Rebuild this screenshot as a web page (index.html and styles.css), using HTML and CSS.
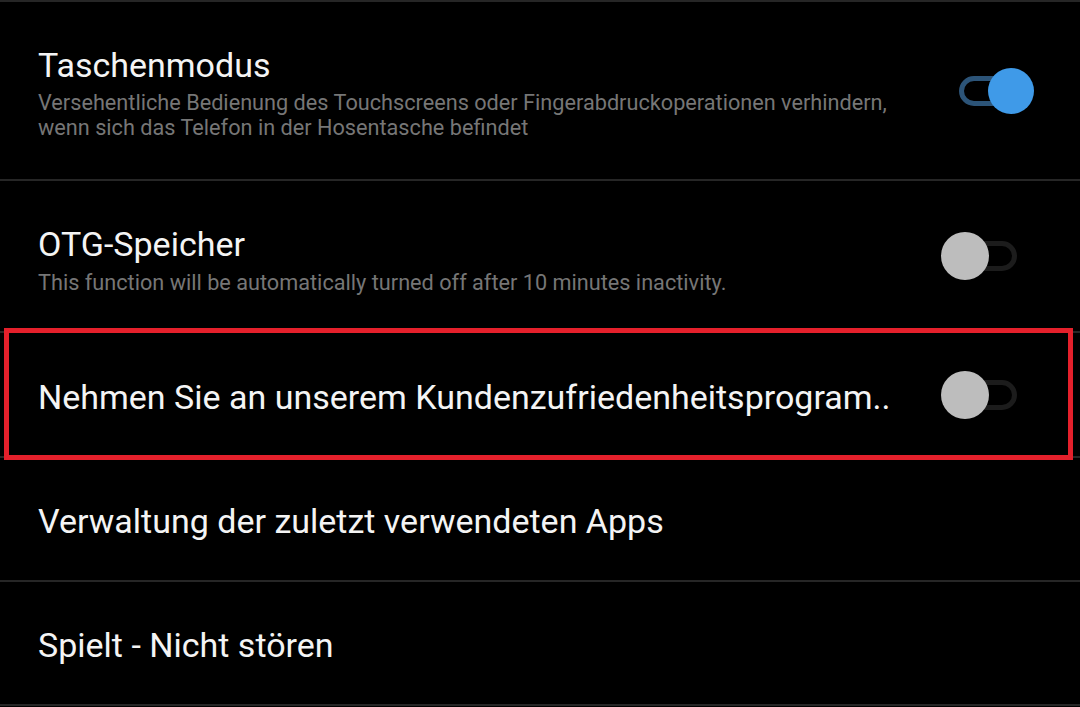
FILE: index.html
```html
<!DOCTYPE html>
<html lang="de">
<head>
<meta charset="utf-8">
<title>Einstellungen</title>
<link rel="stylesheet" href="styles.css">
</head>
<body>
<div class="list">
  <div class="row row-1">
    <div class="text">
      <div class="title">Taschenmodus</div>
      <div class="sub">Versehentliche Bedienung des Touchscreens oder Fingerabdruckoperationen verhindern,<br>wenn sich das Telefon in der Hosentasche befindet</div>
    </div>
    <div class="switch on"><span class="track"></span><span class="thumb"></span></div>
  </div>
  <div class="row row-2">
    <div class="text">
      <div class="title">OTG-Speicher</div>
      <div class="sub">This function will be automatically turned off after 10 minutes inactivity.</div>
    </div>
    <div class="switch"><span class="track"></span><span class="thumb"></span></div>
  </div>
  <div class="row row-3">
    <div class="text">
      <div class="title">Nehmen Sie an unserem Kundenzufriedenheitsprogram..</div>
    </div>
    <div class="switch"><span class="track"></span><span class="thumb"></span></div>
    <div class="highlight"></div>
  </div>
  <div class="row row-4">
    <div class="text">
      <div class="title">Verwaltung der zuletzt verwendeten Apps</div>
    </div>
  </div>
  <div class="row row-5">
    <div class="text">
      <div class="title">Spielt - Nicht stören</div>
    </div>
  </div>
</div>
</body>
</html>
```

FILE: styles.css
```css
html, body {
  margin: 0;
  padding: 0;
  background: #000;
}
body {
  width: 1080px;
  height: 707px;
  overflow: hidden;
  font-family: Roboto, "Noto Sans", "Liberation Sans", sans-serif;
}
.list {
  display: flex;
  flex-direction: column;
  border-top: 2px solid #262626;
}
.row {
  position: relative;
  display: flex;
  align-items: center;
  justify-content: space-between;
  padding: 0 63px 0 38px;
  border-bottom: 2px solid #262626;
  box-sizing: border-box;
}
.row-1 { height: 179px; }
.row-2 { height: 152px; }
.row-3 { height: 125px; }
.row-4 { height: 124px; }
.row-5 { height: 124px; }
.text {
  display: flex;
  flex-direction: column;
  padding-top: 4px;
}
.row-2 .text { padding-top: 8px; }
.row-2 .sub { margin-top: 7px; }
.title {
  color: #f4f4f4;
  font-size: 34px;
  line-height: 38px;
  white-space: nowrap;
}
.sub {
  color: #767676;
  font-size: 21.7px;
  line-height: 25px;
  margin-top: 6px;
  white-space: nowrap;
}
.switch {
  position: relative;
  width: 76px;
  height: 48px;
  flex: none;
}
.track {
  position: absolute;
  left: 18px;
  top: 9px;
  width: 58px;
  height: 30px;
  box-sizing: border-box;
  border: 5px solid #1c1c1c;
  border-radius: 15px;
}
.thumb {
  position: absolute;
  left: 0;
  top: 0;
  width: 48px;
  height: 48px;
  border-radius: 50%;
  background: #bdbdbd;
}
.switch.on .track {
  border-color: #2c5478;
}
.switch.on .thumb {
  left: 47px;
  top: 1px;
  width: 46px;
  height: 46px;
  background: #3f9ae8;
}
.highlight {
  position: absolute;
  left: 4px;
  right: 7px;
  top: -5px;
  bottom: -4px;
  border: 5px solid #e4202b;
  pointer-events: none;
}
```
